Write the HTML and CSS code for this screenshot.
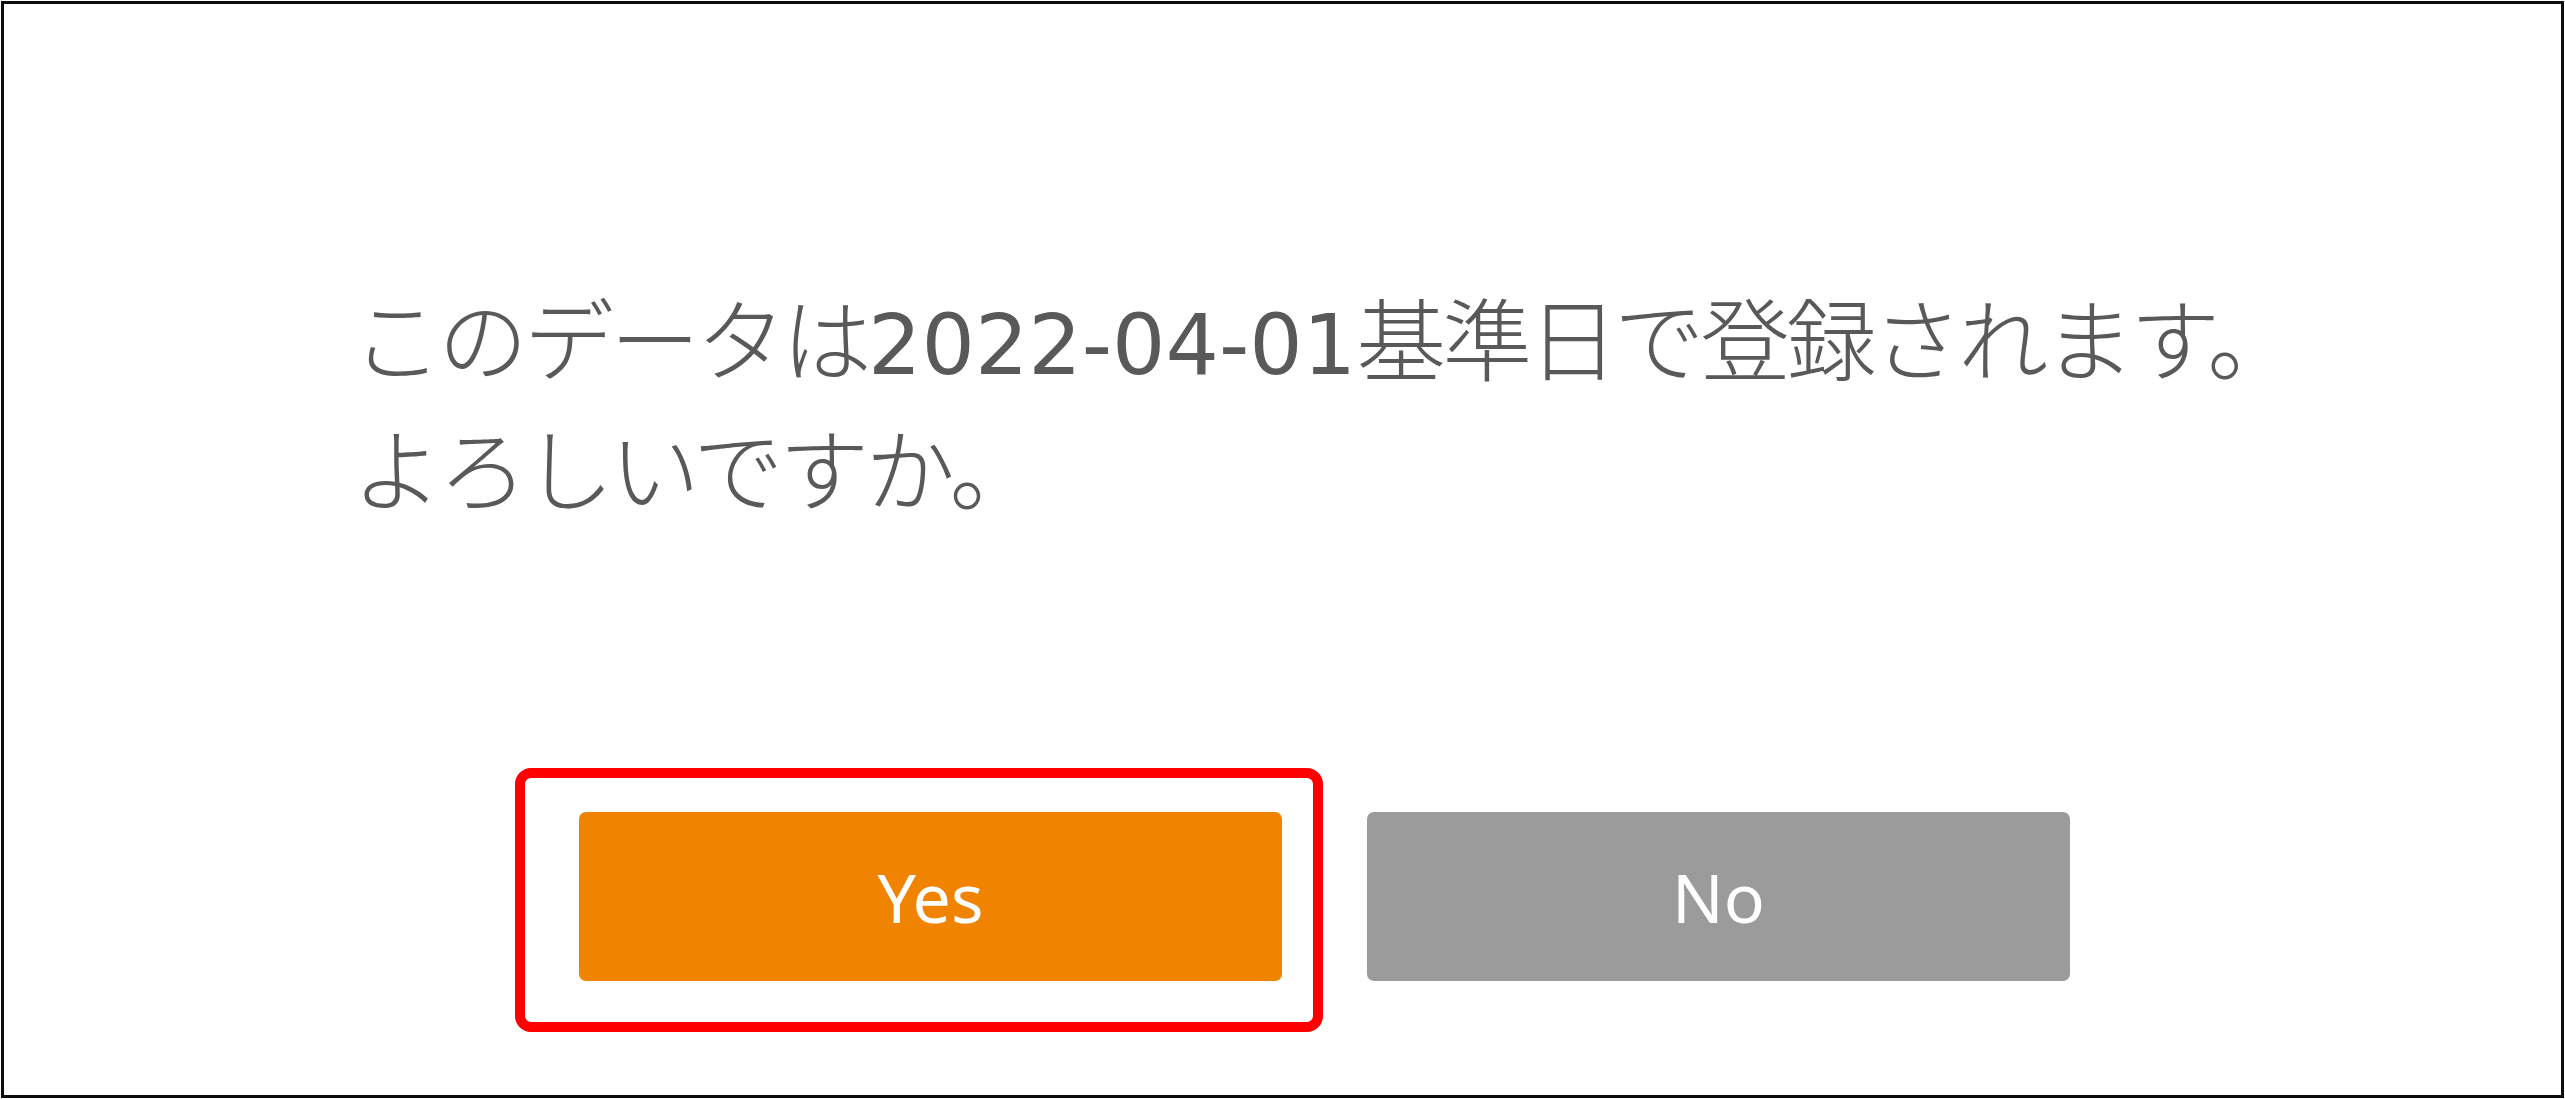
FILE: index.html
```html
<!DOCTYPE html>
<html lang="ja">
<head>
<meta charset="utf-8">
<title>確認</title>
<link rel="stylesheet" href="styles.css">
</head>
<body>
<div class="frame">
  <div class="message">
    <p class="line">このデータは<span class="num">2022-04-01</span>基準日で登録されます。</p>
    <p class="line">よろしいですか。</p>
  </div>
  <div class="actions">
    <div class="highlight">
      <button class="btn btn-yes" type="button">Yes</button>
    </div>
    <button class="btn btn-no" type="button">No</button>
  </div>
</div>
</body>
</html>
```

FILE: styles.css
```css
html, body {
  margin: 0;
  padding: 0;
  background: #ffffff;
}

.frame {
  box-sizing: border-box;
  margin: 1px;
  height: calc(100vh - 2px);
  border: 3px solid #0d0d0d;
  background: #ffffff;
  display: flex;
  flex-direction: column;
}

.message {
  padding: 266px 0 0 348px;
  color: #595959;
  font-family: "Noto Sans CJK JP", sans-serif;
  font-size: 90px;
  font-weight: 300;
  letter-spacing: -4px;
}

.line {
  margin: 0;
  height: 130px;
  line-height: 130px;
  white-space: nowrap;
}

.num {
  font-family: "DejaVu Sans", sans-serif;
  font-size: 84px;
  font-weight: 400;
  letter-spacing: 0;
}

.actions {
  display: flex;
  align-items: flex-start;
  gap: 44px;
  padding-left: 511px;
  margin-top: 238px;
}

.highlight {
  border: 10px solid #ff0000;
  border-radius: 16px;
  padding: 34px 31px 41px 54px;
  display: flex;
}

.btn {
  width: 703px;
  height: 169px;
  border: none;
  border-radius: 7px;
  color: #ffffff;
  font-family: "Noto Sans", "Open Sans", sans-serif;
  font-size: 68px;
  font-weight: 400;
  padding: 0;
  cursor: pointer;
}

.btn-yes {
  background: #f08300;
}

.btn-no {
  background: #9b9b9b;
  margin-top: 44px;
}
```
